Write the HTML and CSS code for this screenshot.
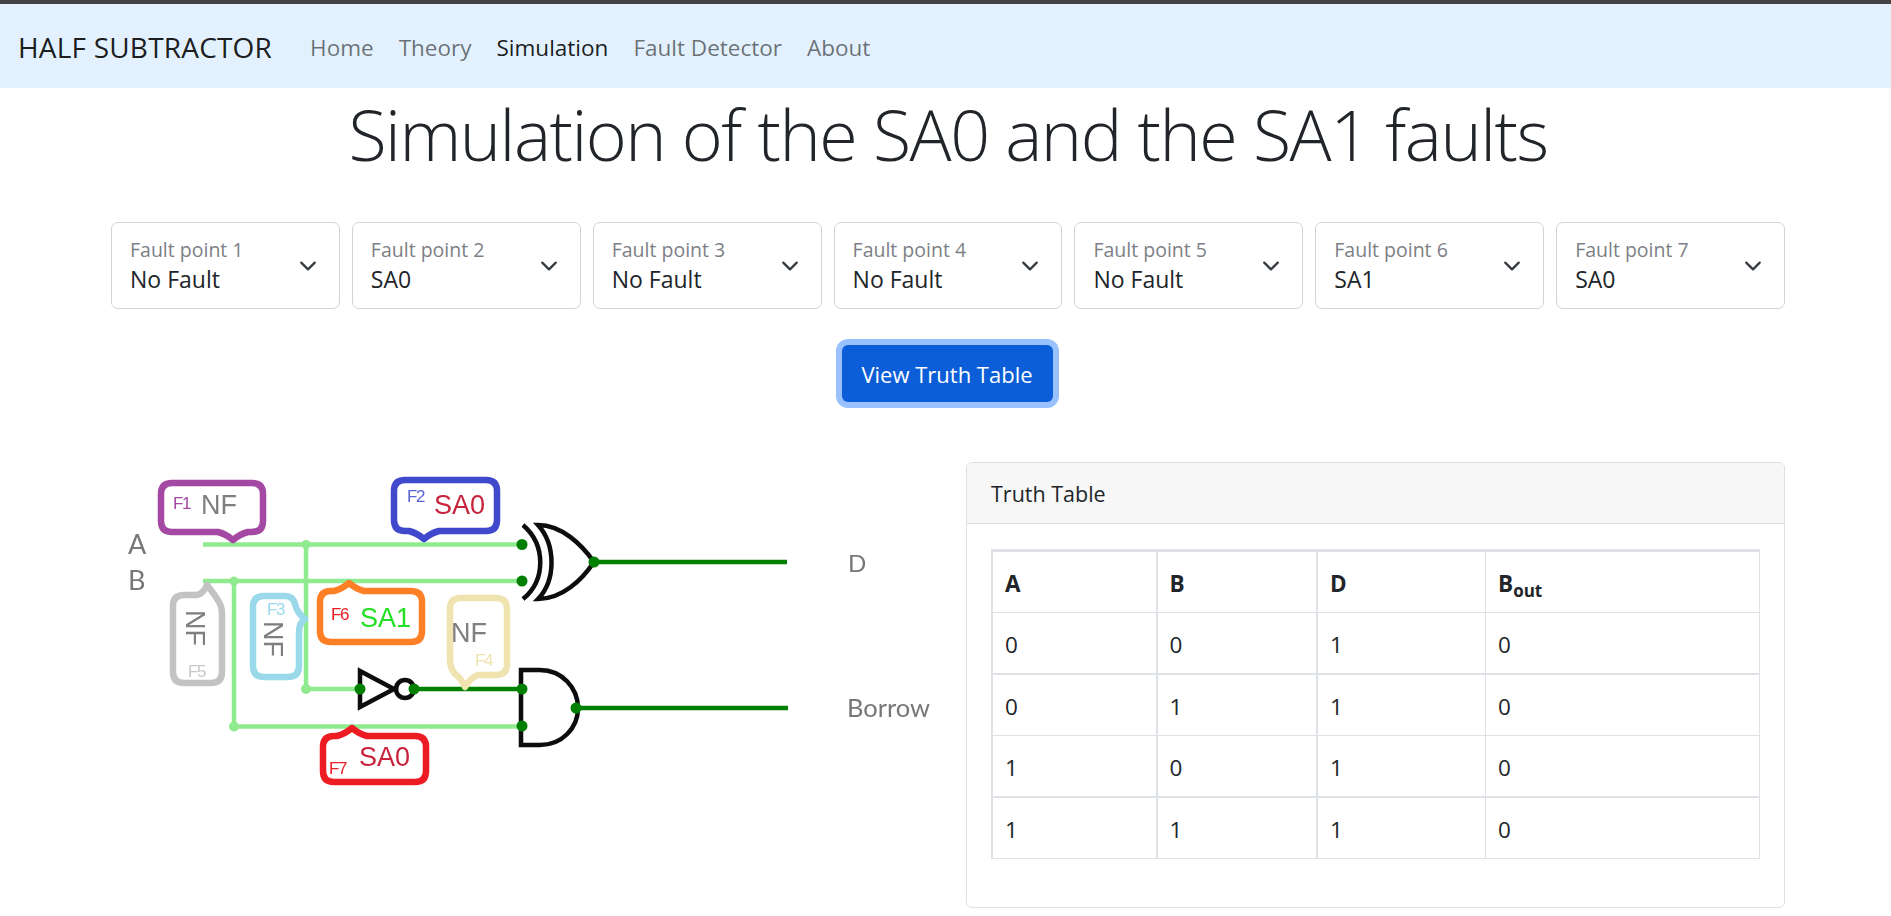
FILE: index.html
```html
<!DOCTYPE html>
<html lang="en">
<head>
<meta charset="utf-8">
<title>Half Subtractor</title>
<link rel="stylesheet" href="styles.css">
</head>
<body>
<nav class="navbar">
  <a class="brand">HALF SUBTRACTOR</a>
  <ul class="nav-links">
    <li><a>Home</a></li>
    <li><a>Theory</a></li>
    <li><a class="active">Simulation</a></li>
    <li><a>Fault Detector</a></li>
    <li><a>About</a></li>
  </ul>
</nav>
<main class="page">
  <h1 class="title">Simulation of the SA0 and the SA1 faults</h1>
  <div class="selects">
    <div class="select"><div class="select-text"><span class="select-label">Fault point 1</span><span class="select-value">No Fault</span></div><svg class="chev" viewBox="0 0 16 16"><path d="M2 5l6 6 6-6"/></svg></div>
    <div class="select"><div class="select-text"><span class="select-label">Fault point 2</span><span class="select-value">SA0</span></div><svg class="chev" viewBox="0 0 16 16"><path d="M2 5l6 6 6-6"/></svg></div>
    <div class="select"><div class="select-text"><span class="select-label">Fault point 3</span><span class="select-value">No Fault</span></div><svg class="chev" viewBox="0 0 16 16"><path d="M2 5l6 6 6-6"/></svg></div>
    <div class="select"><div class="select-text"><span class="select-label">Fault point 4</span><span class="select-value">No Fault</span></div><svg class="chev" viewBox="0 0 16 16"><path d="M2 5l6 6 6-6"/></svg></div>
    <div class="select"><div class="select-text"><span class="select-label">Fault point 5</span><span class="select-value">No Fault</span></div><svg class="chev" viewBox="0 0 16 16"><path d="M2 5l6 6 6-6"/></svg></div>
    <div class="select"><div class="select-text"><span class="select-label">Fault point 6</span><span class="select-value">SA1</span></div><svg class="chev" viewBox="0 0 16 16"><path d="M2 5l6 6 6-6"/></svg></div>
    <div class="select"><div class="select-text"><span class="select-label">Fault point 7</span><span class="select-value">SA0</span></div><svg class="chev" viewBox="0 0 16 16"><path d="M2 5l6 6 6-6"/></svg></div>
  </div>
  <div class="actions"><button class="btn" type="button">View Truth Table</button></div>
  <div class="content">
    <svg class="circuit" viewBox="111 462 840 446" width="840" height="446" xmlns="http://www.w3.org/2000/svg">
      <defs><filter id="soften" x="-5%" y="-5%" width="110%" height="110%"><feGaussianBlur stdDeviation="0.6"/></filter></defs>
      <g class="soft">
        <g class="wire-light">
          <path d="M203 544.5H522M203 581H522M306 544.5V689H360M234 581V726.500H522"/>
          <circle cx="306" cy="544.500" r="4.500"/><circle cx="234" cy="581" r="4.500"/><circle cx="306" cy="689" r="5"/><circle cx="234" cy="726.500" r="5"/>
        </g>
        <g class="wire-dark"><path d="M413 689H522M594 562H787M576 708H788"/></g>
        <g class="gate">
          <path d="M523 525C546 545 546 580 523 599"/>
          <path d="M538 525C562 525 582 545 594 562C582 580 562 599 538 599C556 580 556 545 538 525Z"/>
          <path d="M521 670H540C562 670 578 688 578 708C578 728 562 745 540 745H521Z"/>
          <path d="M360 671V707L394 689Z"/>
          <circle cx="405" cy="689" r="9"/>
        </g>
        <g class="dots">
          <circle cx="522" cy="544.500" r="5.500"/><circle cx="522" cy="581" r="5.500"/><circle cx="594" cy="562" r="5.500"/><circle cx="522" cy="689" r="5.500"/><circle cx="522" cy="726" r="5.500"/><circle cx="576" cy="708" r="5.500"/><circle cx="360" cy="689" r="5.500"/><circle cx="414" cy="689" r="5.500"/>
        </g>
        <g class="callout">
          <path class="c-f1" d="M172 483H252Q263 483 263 494V521Q263 532 252 532H248Q240 534 233 540Q226 534 218 532H172Q161 532 161 521V494Q161 483 172 483Z"/>
          <path class="c-f2" d="M405 480H486Q497 480 497 491V520Q497 531 486 531H439Q431 533 424 539Q417 533 409 531H405Q394 531 394 520V491Q394 480 405 480Z"/>
          <path class="c-f6" d="M331 591H334Q342 589 349 583Q356 589 364 591H411Q422 591 422 602V631Q422 642 411 642H331Q320 642 320 631V602Q320 591 331 591Z"/>
          <path class="c-f5" d="M184 595H197Q203 594 207 585Q215 595 219 602Q222 607 222 614V672Q222 683 211 683H184Q173 683 173 672V606Q173 595 184 595Z"/>
          <path class="c-f3" d="M264 596H285Q293 596 295 604Q297 613 305 619Q299 623 299 632V666Q299 677 288 677H264Q253 677 253 666V607Q253 596 264 596Z"/>
          <path class="c-f4" d="M461 598H496Q507 598 507 609V664Q507 675 496 675H478Q470 678 465 687Q461 678 455 674Q450 668 450 660V609Q450 598 461 598Z"/>
          <path class="c-f7" d="M334 736H337Q345 734 352 728Q359 734 367 736H415Q426 736 426 747V771Q426 782 415 782H334Q323 782 323 771V747Q323 736 334 736Z"/>
        </g>
        <text class="t-name" x="128" y="554" font-size="27">A</text>
        <text class="t-name" x="128" y="590" font-size="27">B</text>
        <text class="t-out" x="848" y="572" font-size="24">D</text>
        <text class="t-out" x="847" y="717" font-size="25.500">Borrow</text>
        <text class="lb tag" x="173" y="509" fill="#a349a4">F1</text>
        <text class="lb" x="201" y="514" font-size="27" fill="#7f7f7f">NF</text>
        <text class="lb tag" x="407" y="502" fill="#5a62d8">F2</text>
        <text class="lb" x="434" y="514" font-size="27" fill="#c8243c">SA0</text>
        <text class="lb tag" x="331" y="620" fill="#ed1c24">F6</text>
        <text class="lb" x="360" y="627" font-size="27" fill="#22e022">SA1</text>
        <text class="lb tag" x="188" y="677" fill="#c8c8c8">F5</text>
        <text class="lb tag" x="267" y="615" fill="#99d9ea">F3</text>
        <text class="lb" x="451" y="642" font-size="27" fill="#7f7f7f">NF</text>
        <text class="lb tag" x="475" y="666" fill="#efe4b0">F4</text>
        <text class="lb tag" x="329" y="774" fill="#ed1c24">F7</text>
        <text class="lb" x="359" y="766" font-size="27" fill="#c8243c">SA0</text>
        <text class="lb" transform="translate(186 610) rotate(90)" font-size="27" fill="#7f7f7f">NF</text>
        <text class="lb" transform="translate(264 621) rotate(90)" font-size="27" fill="#7f7f7f">NF</text>
      </g>
    </svg>
    <section class="card">
      <header class="card-header">Truth Table</header>
      <div class="card-body">
        <table class="truth">
          <colgroup><col class="c1"><col class="c2"><col class="c3"><col class="c4"></colgroup>
          <thead><tr><th>A</th><th>B</th><th>D</th><th>B<sub>out</sub></th></tr></thead>
          <tbody>
            <tr><td>0</td><td>0</td><td>1</td><td>0</td></tr>
            <tr class="thick"><td>0</td><td>1</td><td>1</td><td>0</td></tr>
            <tr><td>1</td><td>0</td><td>1</td><td>0</td></tr>
            <tr class="thick"><td>1</td><td>1</td><td>1</td><td>0</td></tr>
          </tbody>
        </table>
      </div>
    </section>
  </div>
</main>
</body>
</html>
```
FILE: styles.css
```css
* { box-sizing: border-box; }
html, body { margin: 0; padding: 0; }
body {
  font-family: "Open Sans", "Noto Sans", sans-serif;
  color: #212529;
  background: #fff;
  font-size: 20px;
  overflow: hidden;
  height: 916px;
}
.navbar {
  display: flex;
  align-items: center;
  height: 88px;
  border-top: 4px solid #444;
  background: #e2f1fd;
  padding: 2px 18px 0;
}
.brand { font-size: 28px; color: rgba(0,0,0,.9); letter-spacing: .2px; margin-right: 38px; }
.nav-links { display: flex; list-style: none; margin: 0; padding: 0; gap: 25px; }
.nav-links a { font-size: 22.500px; color: rgba(0,0,0,.55); }
.nav-links a.active { color: rgba(0,0,0,.9); }
.page { padding: 0 106px 0 111px; }
.title {
  margin: 0;
  height: 134px;
  font-size: 70px;
  line-height: 92px;
  font-weight: 300;
  text-align: center;
  letter-spacing: -1.500px;
}
.selects { display: grid; grid-template-columns: repeat(7, 1fr); column-gap: 12px; }
.select {
  display: flex;
  align-items: center;
  justify-content: space-between;
  height: 87px;
  border: 1px solid #ced4da;
  border-radius: 7px;
  padding: 0 22px 0 18px;
  background: #fff;
}
.select-text { display: flex; flex-direction: column; }
.select-label { font-size: 19.500px; line-height: 26px; color: #7d8085; }
.select-value { font-size: 23px; line-height: 32px; }
.chev { width: 18px; height: 18px; fill: none; stroke: #343a40; stroke-width: 2; stroke-linecap: round; stroke-linejoin: round; }
.actions { display: flex; justify-content: center; padding-top: 36px; margin-left: -2px; }
.btn {
  width: 211px;
  height: 57px;
  border: 0;
  border-radius: 6px;
  background: #0b5ed7;
  color: #fff;
  font: inherit;
  font-size: 22px;
  padding-top: 2px;
  box-shadow: 0 0 0 6px #98c1fe;
}
.content { display: grid; grid-template-columns: 855px 819px; padding-top: 60px; }
.circuit { display: block; overflow: visible; }
.soft { filter: url(#soften); }
.wire-light { fill: none; stroke: #90ea90; stroke-width: 4.500; }
.wire-light circle { fill: #90ea90; stroke: none; }
.wire-dark { fill: none; stroke: #058005; stroke-width: 4.500; }
.gate { fill: none; stroke: #0a0a0a; stroke-width: 4.500; }
.dots circle { fill: #058005; }
.callout path { fill: none; stroke-width: 6.500; stroke-linejoin: round; }
.c-f1 { stroke: #a349a4; }
.c-f2 { stroke: #3f48cc; }
.c-f3 { stroke: #99d9ea; }
.c-f4 { stroke: #efe4b0; }
.c-f5 { stroke: #c3c3c3; }
.c-f6 { stroke: #ff7f27; }
.c-f7 { stroke: #ed1c24; }
.lb { font-family: "Liberation Sans", sans-serif; }
.tag { font-size: 17px; letter-spacing: -1.500px; }
.t-name, .t-out { font-family: "Lato", sans-serif; fill: #777; }
.card {
  height: 446px;
  border: 1px solid #dfdfdf;
  border-radius: 6px;
  overflow: hidden;
}
.card-header {
  height: 61px;
  padding-left: 24px;
  background: #f7f7f7;
  border-bottom: 1px solid #dfdfdf;
  font-size: 21.500px;
  line-height: 62px;
}
.card-body { padding: 25px 25px 0 24px; }
.truth { width: 767px; table-layout: fixed; border-collapse: collapse; }
.c1 { width: 164.500px; }
.c2 { width: 160.500px; }
.c3 { width: 168.500px; }
.c4 { width: 273.500px; }
.truth th, .truth td {
  border: 1px solid #dee2e6;
  height: 61.500px;
  padding: 3px 12px 0;
  font-size: 22.500px;
  text-align: left;
  vertical-align: middle;
}
.truth th { border-top-width: 3px; font-weight: 700; }
.truth td:nth-child(-n+2), .truth th:nth-child(-n+2) { border-right-width: 2px; }
.truth th:first-child, .truth td:first-child { border-left-width: 2px; }
.truth tr.thick td { border-top-width: 2px; }
.truth sub { font-size: 17px; line-height: 0; vertical-align: -5px; }
```
